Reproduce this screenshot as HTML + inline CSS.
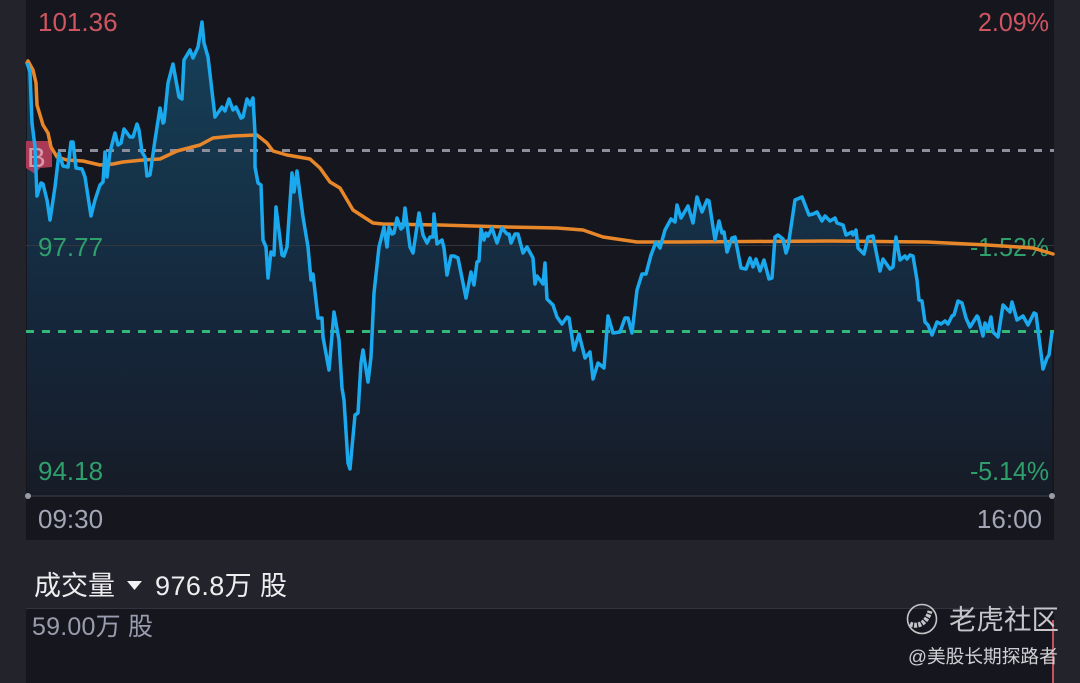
<!DOCTYPE html>
<html><head><meta charset="utf-8"><style>
html,body{margin:0;padding:0;background:#23232c}
body{width:1080px;height:683px;overflow:hidden;position:relative;font-family:"Liberation Sans","Noto Sans CJK SC",sans-serif}
svg{filter:blur(.35px)}
</style></head><body>
<svg width="1080" height="683" viewBox="0 0 1080 683" style="position:absolute;left:0;top:0;display:block">
<defs>
<linearGradient id="a" gradientUnits="userSpaceOnUse" x1="0" y1="20" x2="0" y2="495">
<stop offset="0" stop-color="#15405a"/><stop offset=".3" stop-color="#15354b"/><stop offset=".65" stop-color="#15263a"/><stop offset="1" stop-color="#161c27"/>
</linearGradient>
</defs>
<rect width="1080" height="683" fill="#23232c"/>
<rect x="26" y="0" width="1028" height="540" fill="#16161e"/>
<rect x="26" y="609" width="1028" height="74" fill="#16161e"/>
<rect x="26" y="608" width="1028" height="1" fill="#32333d"/>
<path id="ar" fill="url(#a)" d="M27,495L27,63 30,72 32,123 35,147 37,196 41,183 43,184 47,200 50,220 55,187 59,153 63,166 68,167 71,142 73,142 76,168 82,169 85,177 91,216 95,200 100,185 103,182 105,152 107,177 110,152 115,133 118,145 121,143 124,129 130,137 133,137 137,124 139,130 142,152 145,157 147,176 150,175 155,140 160,108 163,123 164,122 168,83 173,64 179,97 182,99 184,60 190,50 193,58 198,47 202,22 204,43 208,57 215,117 222,107 225,111 229,99 233,110 236,107 241,118 243,117 247,99 250,105 253,98 255,133 255,167 258,183 261,185 263,240 266,247 268,278 271,252 274,255 276,207 278,223 282,255 284,256 287,247 292,173 294,192 297,171 303,217 308,247 311,280 313,274 318,318 322,318 323,337 329,370 334,312 339,340 342,388 344,400 348,463 350,469 355,415 358,413 361,363 363,350 368,382 371,357 374,293 379,247 384,227 387,247 389,227 392,234 394,233 397,218 401,229 403,227 405,208 410,247 413,253 419,213 423,235 427,243 430,237 433,237 434,214 437,244 442,240 444,248 447,275 451,256 454,256 458,258 466,298 471,272 474,285 477,262 479,261 481,229 484,240 486,233 488,236 492,228 497,243 502,228 507,234 509,234 511,243 515,234 518,234 523,253 527,247 533,258 535,284 537,276 543,284 545,263 547,299 553,305 557,317 562,324 567,317 569,318 574,350 579,334 585,358 590,352 593,379 598,363 604,368 608,316 613,333 620,332 625,318 628,318 632,333 637,290 642,274 646,274 651,255 656,242 660,248 665,230 671,219 675,222 677,205 681,218 688,206 693,223 697,197 702,212 707,200 709,201 715,240 719,221 722,233 724,232 727,252 732,238 735,237 741,268 746,269 750,258 753,267 756,259 760,271 764,260 769,279 772,278 775,237 778,235 783,239 786,253 788,247 795,200 802,197 809,215 813,214 817,212 822,221 825,216 830,221 835,218 837,223 843,225 846,235 852,232 853,235 856,230 858,248 864,254 868,237 873,236 880,271 883,259 890,269 893,267 896,237 900,260 905,256 907,259 910,255 913,256 917,280 919,300 922,301 925,322 928,325 932,335 937,322 941,324 945,321 948,324 952,316 954,315 958,301 962,303 966,318 970,327 977,316 978,317 983,336 985,323 988,330 991,317 993,332 998,337 1003,305 1010,312 1012,302 1017,320 1023,316 1028,325 1034,313 1036,314 1043,369 1047,358 1049,355 1052,332L1052,495Z"/>
<rect x="26" y="245" width="1028" height="1" fill="#33363f"/>
<rect x="26" y="495" width="1028" height="2" fill="#2a2c37"/>
<circle cx="28" cy="496" r="3" fill="#9a9ca4"/><circle cx="1052" cy="496" r="3" fill="#9a9ca4"/>
<path d="M26,141H52V167L40,168 35,174 26,168Z" fill="#a93a56"/>
<text x="27" y="167" font-size="28" fill="#d49aa8">B</text>
<line x1="58" y1="150.5" x2="1054" y2="150.5" stroke="#8d8e9c" stroke-width="3" stroke-dasharray="8 8"/>
<line x1="26" y1="331.5" x2="1054" y2="331.5" stroke="#35b877" stroke-width="3" stroke-dasharray="8 8"/>
<g font-size="26">
<text x="38" y="31" fill="#cf5560">101.36</text>
<text x="978" y="31" fill="#cf5560" textLength="71" lengthAdjust="spacingAndGlyphs">2.09%</text>
<text x="38" y="256" fill="#2f9f6c">97.77</text>
<text x="970" y="256" fill="#2f9f6c" textLength="79" lengthAdjust="spacingAndGlyphs">-1.52%</text>
<text x="38" y="480" fill="#2f9f6c">94.18</text>
<text x="970" y="480" fill="#2f9f6c" textLength="79" lengthAdjust="spacingAndGlyphs">-5.14%</text>
<text x="38" y="528" fill="#a4a6b6">09:30</text>
<text x="1042" y="528" fill="#a4a6b6" text-anchor="end">16:00</text>
</g>
<polyline fill="none" stroke="#e8862a" stroke-width="3.500" stroke-linejoin="round" stroke-linecap="round" points="27,63 28,61 33,70 36,83 37,105 43,125 48,133 51,147 57,157 67,160 83,161 100,165 113,164 123,162 143,160 160,159 177,151 200,145 213,138 233,136 257,135 267,143 273,151 287,155 310,159 320,168 330,182 340,188 353,210 373,223 383,224 440,225 507,227 557,228 583,230 603,237 637,242 680,242 830,241 927,242 987,245 1033,248 1053,254"/>
<polyline fill="none" stroke="#1aa9ee" stroke-width="3.500" stroke-linejoin="round" points="27,63 30,72 32,123 35,147 37,196 41,183 43,184 47,200 50,220 55,187 59,153 63,166 68,167 71,142 73,142 76,168 82,169 85,177 91,216 95,200 100,185 103,182 105,152 107,177 110,152 115,133 118,145 121,143 124,129 130,137 133,137 137,124 139,130 142,152 145,157 147,176 150,175 155,140 160,108 163,123 164,122 168,83 173,64 179,97 182,99 184,60 190,50 193,58 198,47 202,22 204,43 208,57 215,117 222,107 225,111 229,99 233,110 236,107 241,118 243,117 247,99 250,105 253,98 255,133 255,167 258,183 261,185 263,240 266,247 268,278 271,252 274,255 276,207 278,223 282,255 284,256 287,247 292,173 294,192 297,171 303,217 308,247 311,280 313,274 318,318 322,318 323,337 329,370 334,312 339,340 342,388 344,400 348,463 350,469 355,415 358,413 361,363 363,350 368,382 371,357 374,293 379,247 384,227 387,247 389,227 392,234 394,233 397,218 401,229 403,227 405,208 410,247 413,253 419,213 423,235 427,243 430,237 433,237 434,214 437,244 442,240 444,248 447,275 451,256 454,256 458,258 466,298 471,272 474,285 477,262 479,261 481,229 484,240 486,233 488,236 492,228 497,243 502,228 507,234 509,234 511,243 515,234 518,234 523,253 527,247 533,258 535,284 537,276 543,284 545,263 547,299 553,305 557,317 562,324 567,317 569,318 574,350 579,334 585,358 590,352 593,379 598,363 604,368 608,316 613,333 620,332 625,318 628,318 632,333 637,290 642,274 646,274 651,255 656,242 660,248 665,230 671,219 675,222 677,205 681,218 688,206 693,223 697,197 702,212 707,200 709,201 715,240 719,221 722,233 724,232 727,252 732,238 735,237 741,268 746,269 750,258 753,267 756,259 760,271 764,260 769,279 772,278 775,237 778,235 783,239 786,253 788,247 795,200 802,197 809,215 813,214 817,212 822,221 825,216 830,221 835,218 837,223 843,225 846,235 852,232 853,235 856,230 858,248 864,254 868,237 873,236 880,271 883,259 890,269 893,267 896,237 900,260 905,256 907,259 910,255 913,256 917,280 919,300 922,301 925,322 928,325 932,335 937,322 941,324 945,321 948,324 952,316 954,315 958,301 962,303 966,318 970,327 977,316 978,317 983,336 985,323 988,330 991,317 993,332 998,337 1003,305 1010,312 1012,302 1017,320 1023,316 1028,325 1034,313 1036,314 1043,369 1047,358 1049,355 1052,332"/>
<text x="34" y="595" font-size="27" fill="#eeeef0">成交量</text>
<path d="M127,581H142L134.500,590Z" fill="#f2f2f4"/>
<text x="155" y="595" font-size="27" fill="#eeeef0" textLength="132" lengthAdjust="spacing">976.8万 股</text>
<text x="32" y="635" font-size="25" fill="#9a9cae" textLength="121" lengthAdjust="spacing">59.00万 股</text>
<rect x="1052" y="620" width="2" height="63" fill="#c4535f"/>
<circle cx="922" cy="619" r="14.500" fill="none" stroke="#c4c4c8" stroke-width="1.600"/>
<path d="M910,624C919,628 927,622 930,611" fill="none" stroke="#c4c4c8" stroke-width="5" stroke-dasharray="3 1.200"/>
<text x="949" y="629" font-size="27.500" fill="#c6c6ca">老虎社区</text>
<text x="908" y="663" font-size="18.700" fill="#d0d0d4">@美股长期探路者</text>
</svg>
</body></html>
